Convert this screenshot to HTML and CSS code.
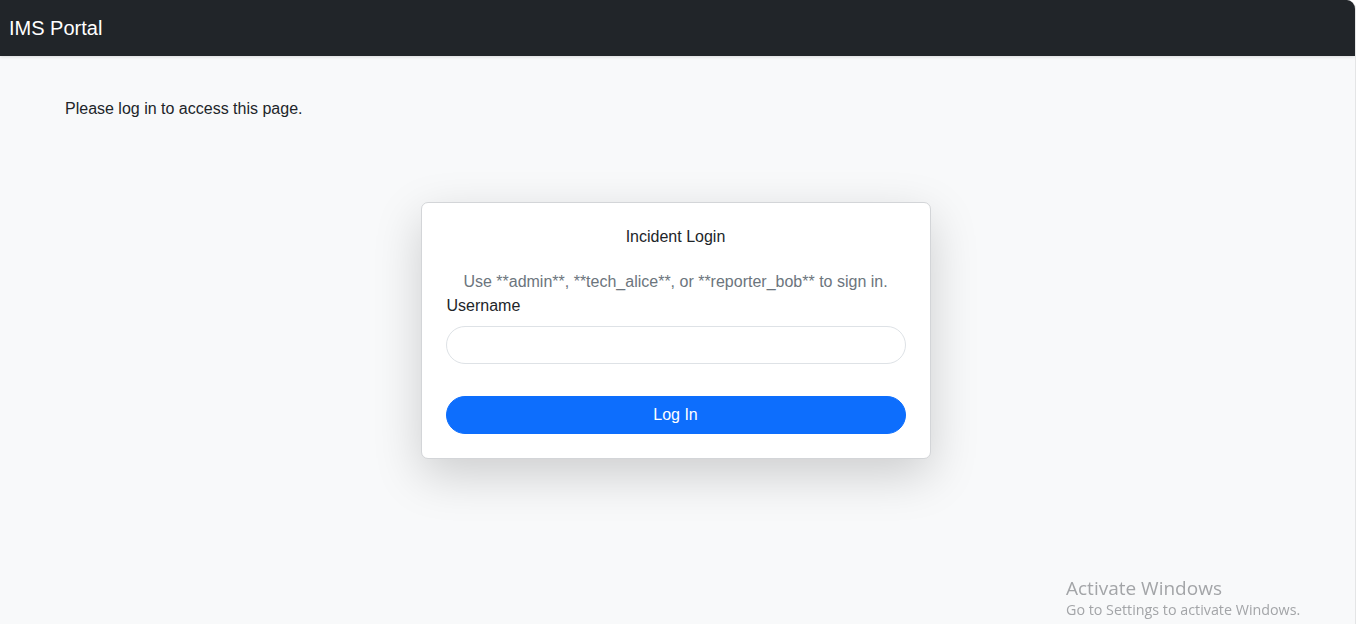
FILE: index.html
```html
<!DOCTYPE html>
<html lang="en">
<head>
<meta charset="utf-8">
<title>IMS Portal</title>
<link rel="stylesheet" href="styles.css">
</head>
<body>
<div class="app">
  <header class="navbar">
    <span class="brand">IMS Portal</span>
  </header>
  <main class="content">
    <p class="notice">Please log in to access this page.</p>
    <div class="card-wrap">
      <div class="card">
        <h2 class="card-title">Incident Login</h2>
        <p class="hint">Use **admin**, **tech_alice**, or **reporter_bob** to sign in.</p>
        <form class="form">
          <label class="label" for="username">Username</label>
          <input class="input" id="username" type="text">
          <button class="btn" type="button">Log In</button>
        </form>
      </div>
    </div>
  </main>
</div>
<div class="watermark">
  <div class="wm-title">Activate Windows</div>
  <div class="wm-sub">Go to Settings to activate Windows.</div>
</div>
</body>
</html>
```
FILE: styles.css
```css
html, body {
  margin: 0;
  padding: 0;
  height: 100%;
  background: #ffffff;
  overflow: hidden;
}
body {
  font-family: "Liberation Sans", Arial, sans-serif;
  font-size: 16px;
  color: #212529;
}
.app {
  width: 1355px;
  height: 100%;
  background: #f8f9fa;
  border-top-right-radius: 9px;
  border-right: 1px solid #e4e5e6;
  overflow: hidden;
}
.navbar {
  height: 56px;
  background: #212529;
  display: flex;
  align-items: center;
  padding-left: 9px;
  box-shadow: 0 1px 3px rgba(0,0,0,0.12);
  position: relative;
  z-index: 1;
}
.brand {
  color: #ffffff;
  font-size: 20px;
  line-height: 24px;
}
.content {
  padding: 41px 0 0 65px;
}
.notice {
  margin: 0;
  line-height: 24px;
}
.card-wrap {
  display: flex;
  justify-content: center;
  padding-top: 81px;
  padding-right: 69px;
}
.card {
  background: #ffffff;
  border: 1px solid #d3d5d8;
  border-radius: 7px;
  box-shadow: 0 16px 48px rgba(0,0,0,0.175);
  padding: 22px 24px 24px 24px;
  box-sizing: content-box;
  width: 460px;
}
.card-title {
  margin: 0 0 21px 0;
  font-size: 16px;
  font-weight: normal;
  text-align: center;
  line-height: 24px;
}
.hint {
  margin: 0;
  text-align: center;
  color: #6c757d;
  line-height: 24px;
}
.form {
  display: flex;
  flex-direction: column;
}
.label {
  line-height: 24px;
  margin-bottom: 8px;
  padding-left: 1px;
}
.input {
  height: 38px;
  box-sizing: border-box;
  border: 1px solid #dee2e6;
  border-radius: 19px;
  background: #ffffff;
  margin: 0 0 32px 0;
  padding: 6px 12px;
  font-size: 16px;
  font-family: inherit;
}
.btn {
  height: 38px;
  box-sizing: border-box;
  border: 1px solid #0d6efd;
  border-radius: 19px;
  background: #0d6efd;
  color: #ffffff;
  font-size: 16px;
  font-family: inherit;
  padding: 0;
}
.watermark {
  position: fixed;
  left: 1066px;
  top: 576px;
  color: #a3a5a8;
  font-family: "Open Sans", "Noto Sans", sans-serif;
}
.wm-title {
  font-size: 19px;
  line-height: 24px;
}
.wm-sub {
  font-size: 14.3px;
  line-height: 20px;
}
```
